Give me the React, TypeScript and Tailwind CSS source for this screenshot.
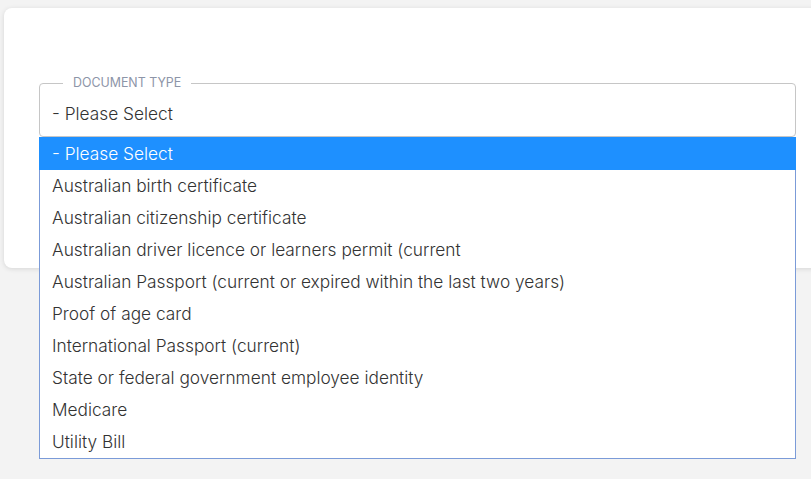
const options = [
  "- Please Select",
  "Australian birth certificate",
  "Australian citizenship certificate",
  "Australian driver licence or learners permit (current",
  "Australian Passport (current or expired within the last two years)",
  "Proof of age card",
  "International Passport (current)",
  "State or federal government employee identity",
  "Medicare",
  "Utility Bill",
];

export default function App() {
  return (
    <div
      className="w-[811px] h-[479px] overflow-hidden bg-[#f3f3f3] pt-[8px] pl-[4px]"
      style={{ fontFamily: "Inter, sans-serif" }}
    >
      <div className="w-[830px] h-[260px] bg-white rounded-[8px] shadow-[0_1px_5px_rgba(0,0,0,0.12)] pt-[75px] pl-[35px]">
        <div className="relative w-[757px]">
          <div className="h-[54px] border border-[#c6c6c6] rounded-[4px] pl-[12px] pt-[19px] text-[17.3px] leading-[22px] font-[350] text-[#333]">
            - Please Select
          </div>
          <span className="absolute left-[24px] top-[-7px] bg-white px-[10px] text-[12.4px] leading-[14px] text-[#8d95a8] uppercase">
            Document Type
          </span>
          <div className="absolute left-0 top-full w-[757px] bg-white border-x border-b border-[#7b9bd8] text-[17.3px] font-[350] text-[#333]">
            {options.map((o, i) =>
              i === 0 ? (
                <div key={o} className="h-[33px] pt-[1px] leading-[32px] bg-[#1e90ff] text-white -mx-px px-[13px]">
                  {o}
                </div>
              ) : (
                <div key={o} className="h-[32px] leading-[32px] pl-[12px]">
                  {o}
                </div>
              )
            )}
          </div>
        </div>
      </div>
    </div>
  );
}
